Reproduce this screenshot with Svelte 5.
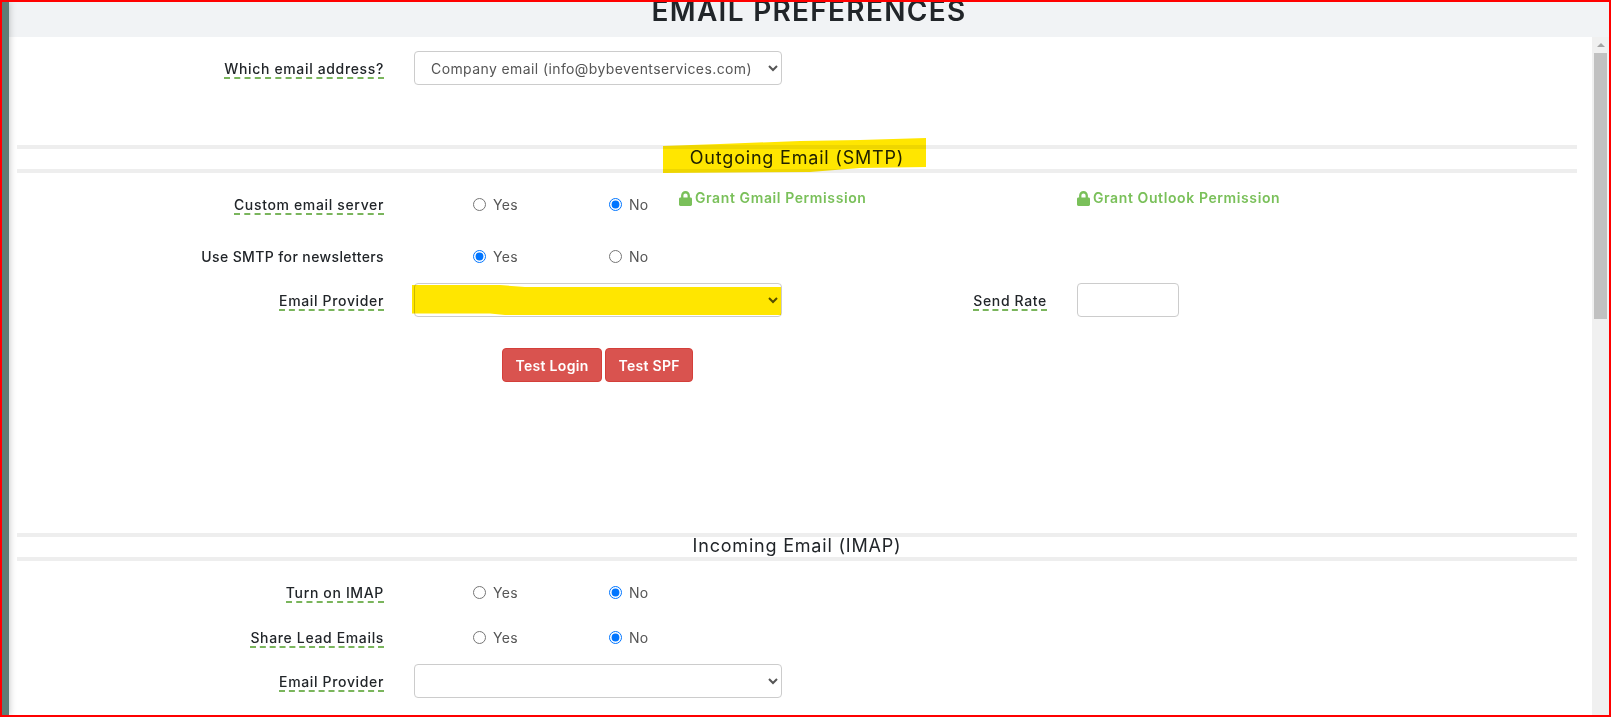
<script lang="ts">
	let creds = $state({ custom: 'no', smtp: 'yes', imap: 'no', share: 'no' });
</script>

{#snippet yesNo(name: string, key: 'custom' | 'smtp' | 'imap' | 'share')}
	<div class="radios">
		<label class="radio"><input type="radio" {name} value="yes" bind:group={creds[key]} /> Yes</label>
		<label class="radio"><input type="radio" {name} value="no" bind:group={creds[key]} /> No</label>
	</div>
{/snippet}

{#snippet lock()}
	<svg class="lock" viewBox="0 0 448 512" aria-hidden="true">
		<path
			d="M400 224h-24v-72C376 68.2 307.8 0 224 0S72 68.2 72 152v72H48c-26.5 0-48 21.5-48 48v192c0 26.5 21.5 48 48 48h352c26.5 0 48-21.5 48-48V272c0-26.5-21.5-48-48-48zm-104 0H152v-72c0-39.7 32.3-72 72-72s72 32.3 72 72v72z"
		/>
	</svg>
{/snippet}

<div class="frame">
	<div class="strip"></div>
	<div class="main">
		<header class="band"><h1>EMAIL PREFERENCES</h1></header>
		<div class="body">
			<div class="content">
				<div class="row first">
					<span class="label"><span class="tip">Which email address?</span></span>
					<select class="field">
						<option>Company email (info@bybeventservices.com)</option>
					</select>
				</div>

				<h2 class="section">Outgoing Email (SMTP)</h2>

				<div class="row after-head">
					<span class="label raised"><span class="tip">Custom email server</span></span>
					{@render yesNo('custom', 'custom')}
					<a class="grant" href="#gmail">{@render lock()}Grant Gmail Permission</a>
					<a class="grant" href="#outlook">{@render lock()}Grant Outlook Permission</a>
				</div>
				<div class="row smtp">
					<span class="label plain">Use SMTP for newsletters</span>
					{@render yesNo('smtp', 'smtp')}
				</div>
				<div class="row tight">
					<span class="label"><span class="tip">Email Provider</span></span>
					<select class="field"><option></option></select>
					<span class="rate-label"><span class="tip">Send Rate</span></span>
					<input class="rate" type="text" />
				</div>
				<div class="actions">
					<button type="button">Test Login</button>
					<button type="button">Test SPF</button>
				</div>

				<h2 class="section">Incoming Email (IMAP)</h2>

				<div class="row after-head">
					<span class="label raised"><span class="tip">Turn on IMAP</span></span>
					{@render yesNo('imap', 'imap')}
				</div>
				<div class="row share">
					<span class="label raised"><span class="tip">Share Lead Emails</span></span>
					{@render yesNo('share', 'share')}
				</div>
				<div class="row tight">
					<span class="label"><span class="tip">Email Provider</span></span>
					<select class="field"><option></option></select>
				</div>
			</div>

			<div class="scrollbar">
				<svg class="up" viewBox="0 0 8 4" aria-hidden="true"><path d="M4 0l4 4H0z" /></svg>
				<div class="thumb"></div>
			</div>
		</div>
	</div>

	<!-- marker pen strokes drawn over the screenshot -->
	<svg class="marker" width="1611" height="717" aria-hidden="true">
		<polygon points="663,146 720,144 800,141 860,140 926,138 926,167 860,168 810,172 663,173" />
		<polygon points="412,285 500,285 525,287 781,287 781,315 505,315 490,313.5 412,313.5" />
	</svg>
</div>

<style>
	:global(body) {
		margin: 0;
		overflow: hidden;
		background: #fff;
	}

	.frame {
		position: relative;
		display: flex;
		box-sizing: border-box;
		width: 1611px;
		height: 717px;
		border: 2px solid #f00;
		overflow: hidden;
		font-family: Inter, 'Liberation Sans', sans-serif;
		font-size: 14px;
		color: #212529;
	}

	.strip {
		position: relative;
		z-index: 1;
		flex: 0 0 7px;
		background: #5f7d75;
		box-shadow: 0 0 7px rgba(60, 60, 60, 0.35);
	}

	.main {
		flex: 1;
		display: flex;
		flex-direction: column;
		min-width: 0;
	}

	.band {
		flex: 0 0 35px;
		background: #f1f3f5;
		overflow: hidden;
	}

	h1 {
		margin: -6px 0 0;
		font-size: 28px;
		line-height: 30px;
		font-weight: 600;
		letter-spacing: 1.3px;
		text-align: center;
		color: #212529;
	}

	.body {
		flex: 1;
		display: flex;
		min-height: 0;
	}

	.content {
		flex: 1;
		padding: 14px 15px 0 8px;
		min-width: 0;
	}

	.row {
		display: flex;
		align-items: center;
		height: 34px;
	}

	.first {
		margin-bottom: 60px;
	}
	.after-head {
		margin-top: 15px;
	}
	.smtp {
		margin-top: 18px;
	}
	.share {
		margin-top: 11px;
	}
	.tight {
		margin-top: 9px;
	}

	.label {
		flex: 0 0 367px;
		text-align: right;
		font-weight: 500;
		letter-spacing: 0.65px;
		margin-right: 30px;
	}

	.raised {
		margin-top: -2px;
	}

	.plain {
		letter-spacing: 0.38px;
		margin-top: -1px;
	}

	.tip {
		display: inline-block;
		margin-top: 2px;
		line-height: 17px;
		border-bottom: 2px dashed #7ab55c;
	}

	.field {
		box-sizing: border-box;
		width: 368px;
		height: 34px;
		padding: 0 12px;
		background: #fff;
		border: 1px solid #ccc;
		border-radius: 4px;
		font: inherit;
		letter-spacing: 0.4px;
		color: #555;
	}

	.radios {
		display: flex;
		width: 206px;
		margin-left: 59px;
		margin-top: -1px;
	}

	.radio {
		display: flex;
		align-items: center;
		flex: 0 0 136px;
		color: #555;
		letter-spacing: 0.3px;
	}

	.radio input {
		margin: 0 7px 0 0;
	}

	.grant {
		align-self: flex-start;
		flex: 0 0 398px;
		display: flex;
		align-items: center;
		line-height: 20px;
		color: #7ac05a;
		font-weight: 600;
		letter-spacing: 0.6px;
		text-decoration: none;
	}

	.lock {
		width: 13px;
		height: 15px;
		margin-right: 3px;
		fill: #7ac05a;
	}

	.rate-label {
		margin-left: 191px;
		width: 74px;
		font-weight: 500;
		letter-spacing: 0.65px;
		text-align: right;
	}

	.rate {
		box-sizing: border-box;
		width: 102px;
		height: 34px;
		margin-left: 30px;
		border: 1px solid #ccc;
		border-radius: 4px;
	}

	.section {
		box-sizing: border-box;
		height: 28px;
		margin: 0;
		border-top: 4px solid #eee;
		border-bottom: 4px solid #eee;
		font-size: 18px;
		font-weight: 400;
		line-height: 17px;
		letter-spacing: 0.8px;
		text-align: center;
	}

	.actions {
		display: flex;
		gap: 3px;
		margin: 31px 0 151px 485px;
	}

	.actions button {
		box-sizing: border-box;
		height: 34px;
		padding: 0 12.5px;
		background: #d9534f;
		border: 1px solid #d43f3a;
		border-radius: 4px;
		color: #fff;
		font: inherit;
		font-weight: 600;
		letter-spacing: 0.3px;
	}

	.scrollbar {
		flex: 0 0 17px;
		display: flex;
		flex-direction: column;
		align-items: center;
		background: #f0f0f0;
	}

	.up {
		width: 8px;
		height: 4px;
		margin-top: 6px;
		fill: #a3a3a3;
	}

	.thumb {
		width: 13px;
		height: 266px;
		margin-top: 6px;
		background: #c1c1c1;
	}

	.marker {
		position: absolute;
		left: -2px;
		top: -2px;
		z-index: 2;
		mix-blend-mode: multiply;
		pointer-events: none;
		fill: #ffe600;
	}
</style>
